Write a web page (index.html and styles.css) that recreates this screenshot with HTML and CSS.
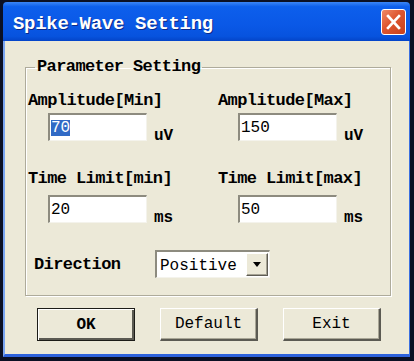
FILE: index.html
```html
<!DOCTYPE html>
<html lang="en">
<head>
    <meta charset="UTF-8">
    <title>Spike-Wave Setting</title>
    <link rel="stylesheet" href="styles.css">
</head>
<body>
    <div class="window">
        <div class="titlebar">
            <span class="title">Spike-Wave Setting</span>
            <span class="close">
                <svg width="23" height="24" viewBox="0 0 23 24">
                    <path d="M6 6 L17 18 M17 6 L6 18" stroke="#fff" stroke-width="2.6" stroke-linecap="square" fill="none"/>
                </svg>
            </span>
        </div>

        <div class="client">
            <fieldset class="group">
                <legend>Parameter Setting</legend>

                <div class="fields">
                    <div class="field amp">
                        <div class="label">Amplitude[Min]</div>
                        <div class="entry">
                            <span class="input"><span class="sel">70</span></span>
                            <span class="unit">uV</span>
                        </div>
                    </div>
                    <div class="field amp">
                        <div class="label">Amplitude[Max]</div>
                        <div class="entry">
                            <span class="input">150</span>
                            <span class="unit">uV</span>
                        </div>
                    </div>
                    <div class="field time">
                        <div class="label">Time Limit[min]</div>
                        <div class="entry">
                            <span class="input">20</span>
                            <span class="unit">ms</span>
                        </div>
                    </div>
                    <div class="field time">
                        <div class="label">Time Limit[max]</div>
                        <div class="entry">
                            <span class="input">50</span>
                            <span class="unit">ms</span>
                        </div>
                    </div>
                </div>

                <div class="direction">
                    <span class="label">Direction</span>
                    <div class="combo">
                        <span class="combo-text">Positive</span>
                        <span class="combo-btn">
                            <svg width="8" height="5" viewBox="0 0 8 5"><path d="M0 0 H8 L4 5 Z" fill="#000"/></svg>
                        </span>
                    </div>
                </div>
            </fieldset>

            <div class="buttons">
                <button class="btn btn-default">OK</button>
                <button class="btn">Default</button>
                <button class="btn">Exit</button>
            </div>
        </div>
    </div>
</body>
</html>
```

FILE: styles.css
```css
* {
    box-sizing: border-box;
}

body {
    margin: 0;
    background: #0b1024;
    font-family: "Liberation Mono", "DejaVu Sans Mono", monospace;
    font-size: 16px;
    color: #000;
}

/* window frame */
.window {
    width: 414px;
    height: 361px;
    display: flex;
    flex-direction: column;
    padding: 2px 4px 4px 3px;
    background: #0b1024;
}

.titlebar {
    height: 39px;
    display: flex;
    align-items: center;
    justify-content: space-between;
    padding: 1px 4px 0 10px;
    border-radius: 4px 4px 0 0;
    background: linear-gradient(#3b86f6 0%, #0d5fec 12%, #0a58e6 60%, #0753de 88%, #0444c8 100%);
}

.title {
    padding-top: 4px;
    color: #fff;
    font-size: 19px;
    font-weight: bold;
    letter-spacing: -0.3px;
    text-shadow: 1px 1px 0 #0b2a8a;
}

.close {
    width: 25px;
    height: 26px;
    display: flex;
    align-items: center;
    justify-content: center;
    border: 1px solid #fff;
    border-radius: 3px;
    background: linear-gradient(135deg, #ef8a68 0%, #de5630 45%, #c8401a 100%);
}

.client {
    flex: 1;
    display: flex;
    flex-direction: column;
    padding: 17px 18px 0 20px;
    background: #ece9d8;
    border-left: 2px solid #7aa5f2;
    border-right: 1px solid #3a6fe0;
    border-bottom: 3px solid #2d62dc;
}

/* group box */
.group {
    margin: 0;
    min-width: 0;
    padding: 16px 8px 17px 2px;
    border: 1px solid #aeab9b;
    box-shadow: inset 1px 1px 0 #fff, 1px 1px 0 #fff;
}

.group legend {
    margin-left: 7px;
    padding: 0 2px;
    line-height: 18px;
    font-size: 17px;
    letter-spacing: -0.6px;
    font-weight: bold;
}

.label {
    line-height: 18px;
    font-size: 17px;
    letter-spacing: -0.6px;
    font-weight: bold;
    white-space: nowrap;
}

.fields {
    display: grid;
    grid-template-columns: 190px 1fr;
    row-gap: 29px;
}

.entry {
    display: flex;
    margin-left: 20px;
}

.amp .entry {
    margin-top: 3px;
}

.time .entry {
    margin-top: 7px;
}

.input {
    width: 99px;
    height: 28px;
    display: flex;
    align-items: center;
    padding: 1px 0 0 1px;
    background: #fff;
    border-style: solid;
    border-width: 2px 1px 1px 2px;
    border-color: #8d8b7f #f4f3ec #f4f3ec #8d8b7f;
    line-height: 16px;
}

.sel {
    background: #316ac5;
    color: #fff;
}

.unit {
    align-self: flex-end;
    margin: 0 0 -4px 7px;
    line-height: 18px;
    font-weight: bold;
}

/* direction combo */
.direction {
    display: flex;
    align-items: center;
    margin-top: 27px;
    padding-left: 6px;
}

.direction .label {
    flex: 0 0 121px;
    padding-top: 2px;
}

.combo {
    width: 115px;
    height: 28px;
    display: flex;
    align-items: center;
    justify-content: space-between;
    padding: 0 1px 1px 3px;
    background: #fff;
    border-style: solid;
    border-width: 2px 1px 1px 2px;
    border-color: #8d8b7f #f4f3ec #f4f3ec #8d8b7f;
}

.combo-text {
    padding-top: 3px;
    line-height: 18px;
}

.combo-btn {
    width: 22px;
    height: 23px;
    display: flex;
    align-items: center;
    justify-content: center;
    background: #ece9d8;
    border-style: solid;
    border-width: 1px;
    border-color: #fff #5e5c54 #5e5c54 #fff;
    box-shadow: inset -1px -1px 0 #a5a294;
}

/* dialog buttons */
.buttons {
    display: flex;
    gap: 25px;
    margin-top: 12px;
    padding-left: 12px;
}

.btn {
    width: 98px;
    height: 33px;
    padding: 0;
    font-family: inherit;
    font-size: 16px;
    color: #000;
    background: #ece9d8;
    border-style: solid;
    border-width: 1px 2px 2px 1px;
    border-color: #fff #5b5a52 #5b5a52 #fff;
    box-shadow: inset -1px -1px 0 #a9a696;
}

.btn-default {
    font-weight: bold;
    border: 1px solid #1c1c18;
    box-shadow: inset 1px 1px 0 #fff, inset -2px -2px 0 #5b5a52;
}
```
